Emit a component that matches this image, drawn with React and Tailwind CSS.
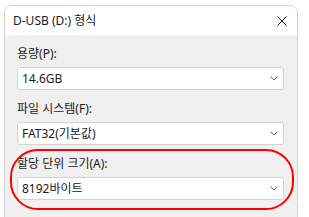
import React from "react";

const font = {
  fontFamily: "'Segoe UI', 'Noto Sans', 'Noto Sans CJK KR', sans-serif",
};

function Chevron() {
  return (
    <svg width="8" height="5" viewBox="0 0 8 5" className="shrink-0 mr-[1px]">
      <path d="M0.6 0.6 L4 4 L7.4 0.6" fill="none" stroke="#666666" strokeWidth="1" />
    </svg>
  );
}

function Select({ value }) {
  return (
    <div className="mt-[5px] h-[23px] w-full bg-white border border-[#d3d3d3] rounded-[3px] flex items-center justify-between pl-[4px] pr-[4px]">
      <span className="text-[12px] leading-[16px] text-[#1b1b1b]">{value}</span>
      <Chevron />
    </div>
  );
}

function Field({ label, value, first }) {
  return (
    <div className={first ? "" : "mt-[11px]"}>
      <div className="text-[12px] leading-[16px] text-[#1b1b1b]">{label}</div>
      <Select value={value} />
    </div>
  );
}

export default function App() {
  return (
    <div className="w-[309px] h-[217px] bg-white relative overflow-hidden" style={font}>
      <div className="ml-[4px] mt-[5px] w-[294px] h-[240px] border border-[#d2d2d2] rounded-t-[8px] overflow-hidden flex flex-col">
        <div className="h-[29px] bg-white flex items-center justify-between pl-[8px] pr-[10px]">
          <span className="text-[12px] leading-[16px] text-[#1b1b1b]">D-USB (D:) 형식</span>
          <svg width="10" height="10" viewBox="0 0 10 10">
            <path d="M0.5 0.5 L9.5 9.5 M9.5 0.5 L0.5 9.5" stroke="#1b1b1b" strokeWidth="1" />
          </svg>
        </div>
        <div className="flex-1 bg-[#f0f0f0] pt-[11px] pl-[12px] pr-[13px]">
          <Field first label="용량(P):" value="14.6GB" />
          <Field label="파일 시스템(F):" value="FAT32(기본값)" />
          <Field label="할당 단위 크기(A):" value="8192바이트" />
        </div>
      </div>
      <div className="absolute left-[10px] top-[149px] w-[284px] h-[61px] border-2 border-[#ff0000] rounded-[28px] pointer-events-none" />
    </div>
  );
}
